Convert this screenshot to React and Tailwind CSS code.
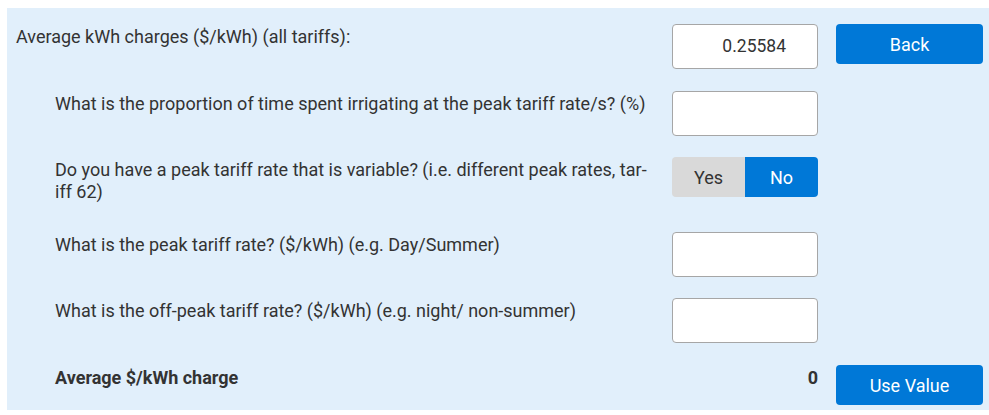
import React from "react";

const font = { fontFamily: "Roboto, 'Noto Sans', sans-serif" };

function Input({ value }) {
  return (
    <div className="w-[146px] h-[45px] bg-white border border-[#a6a6a6] rounded-[4px] flex items-center justify-end pr-[31px] text-[17.5px] text-[#333]">
      {value}
    </div>
  );
}

function Btn({ children }) {
  return (
    <div className="w-[147px] h-[40px] bg-[#0078d7] rounded-[4px] text-white text-[18px] flex items-center justify-center">
      {children}
    </div>
  );
}

function Row({ indent, label, right, button, className = "", labelClass = "" }) {
  return (
    <div className={"flex items-start " + className}>
      <div className={"flex-1 text-[18px] leading-[21.6px] text-[#333] pt-[2px] " + (indent ? "pl-[48px] " : "pl-[9px] ") + labelClass}>
        {label}
      </div>
      <div className="w-[146px]">{right}</div>
      <div className="w-[147px] ml-[18px]">{button}</div>
    </div>
  );
}

export default function App() {
  return (
    <div className="w-[989px] h-[415px] bg-white" style={font}>
      <div className="ml-[7px] mt-[8px] h-[402px] bg-[#e1effb] pt-[16px] pr-[6px] flex flex-col">
        <Row
          label="Average kWh charges ($/kWh) (all tariffs):"
          right={<Input value="0.25584" />}
          button={<Btn>Back</Btn>}
        />
        <Row
          indent
          className="mt-[22px]"
          label="What is the proportion of time spent irrigating at the peak tariff rate/s? (%)"
          right={<Input value="" />}
        />
        <Row
          indent
          className="mt-[21px] h-[54px]"
          label={
            <>
              Do you have a peak tariff rate that is variable? (i.e. different peak rates, tar-
              <br />
              iff 62)
            </>
          }
          right={
            <div className="flex h-[40px] rounded-[4px] overflow-hidden text-[18px]">
              <div className="w-[73px] bg-[#d9d9d9] text-[#333] flex items-center justify-center">Yes</div>
              <div className="w-[73px] bg-[#0078d7] text-white flex items-center justify-center">No</div>
            </div>
          }
        />
        <Row
          indent
          className="mt-[21px]"
          label="What is the peak tariff rate? ($/kWh) (e.g. Day/Summer)"
          right={<Input value="" />}
        />
        <Row
          indent
          className="mt-[21px]"
          label="What is the off-peak tariff rate? ($/kWh) (e.g. night/ non-summer)"
          right={<Input value="" />}
        />
        <div className="flex items-start mt-[22px] h-[40px]">
          <div className="flex-1 pl-[48px] pt-[2px] text-[18px] leading-[21.6px] font-bold text-[#333]">Average $/kWh charge</div>
          <div className="w-[146px] pt-[2px] text-right text-[18px] leading-[21.6px] font-bold text-[#333]">0</div>
          <div className="w-[147px] ml-[18px]">
            <Btn>Use Value</Btn>
          </div>
        </div>
      </div>
    </div>
  );
}
